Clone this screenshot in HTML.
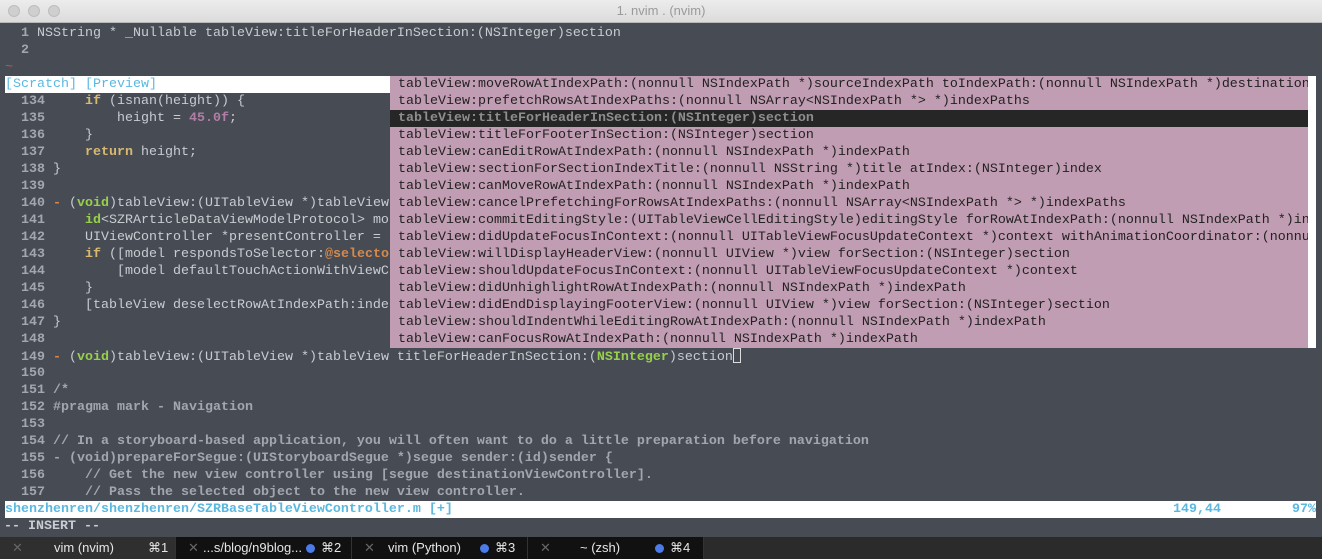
<!DOCTYPE html>
<html><head><meta charset="utf-8"><style>
*{margin:0;padding:0;box-sizing:border-box}
body{width:1322px;height:559px;background:#474b54;overflow:hidden;position:relative;font-family:"Liberation Mono",monospace;font-size:13.33px;color:#c9ccd1}
.tb{position:absolute;left:0;top:0;width:1322px;height:23px;background:linear-gradient(#ececec,#dcdcdc);border-bottom:1px solid #b8b8b8;font-family:"Liberation Sans",sans-serif;font-size:13px;color:#9a9a9a;text-align:center;line-height:22px}
.dot{position:absolute;top:5px;width:12px;height:12px;border-radius:50%;background:#cfcfcf;border:1px solid #bdbdbd}
.l{position:absolute;left:5px;height:17px;line-height:18px;white-space:pre}
.n{color:#a3a7ad;font-weight:bold}
.b{font-weight:bold}
.k{color:#d9b970;font-weight:bold}
.g{color:#97d04a;font-weight:bold}
.o{color:#d48a4c;font-weight:bold}
.p{color:#b07ea6;font-weight:bold}
.c{color:#a3a7ad;font-weight:bold}
.pop{position:absolute;left:390px;top:76px;width:918px;height:272px;background:#c19db3}
.pr{height:17px;line-height:18px;padding-left:8px;white-space:pre;color:#222;overflow:hidden}
.sel{background:#262626;color:#8e8e8e;font-weight:bold}
.sb{position:absolute;left:1308px;top:76px;width:8px;height:272px;background:#fff}
.tabs{position:absolute;left:0;top:537px;width:1322px;height:22px;background:#2b2b2b;font-family:"Liberation Sans",sans-serif;font-size:13px;color:#e6e6e6}
.tab{position:absolute;top:0;height:22px;width:176px;background:#111;border-right:1px solid #333;line-height:22px}
.tab .x{position:absolute;left:12px;color:#666}
.bd{display:inline-block;width:9px;height:9px;border-radius:50%;background:#4a7be8;position:absolute;top:7px}
</style></head><body>
<div class="tb">1. nvim . (nvim)
<div class="dot" style="left:8px"></div><div class="dot" style="left:28px"></div><div class="dot" style="left:48px"></div></div>

<div class="l" style="top:25px"><span class="n">  1</span> NSString * _Nullable tableView:titleForHeaderInSection:(NSInteger)section</div>
<div class="l" style="top:42px"><span class="n">  2</span></div>
<div class="l" style="top:59px;color:#d05050">~</div>
<div style="position:absolute;left:5px;top:76px;width:385px;height:17px;background:#fff"></div>
<div class="l" style="top:76px;left:5px;color:#5ab8e0">[Scratch] [Preview]</div>
<div class="l" style="top:93px"><span class="n">  134</span>     <span class="k">if</span> (isnan(height)) {</div>
<div class="l" style="top:110px"><span class="n">  135</span>         height = <span class="p">45.0f</span>;</div>
<div class="l" style="top:127px"><span class="n">  136</span>     }</div>
<div class="l" style="top:144px"><span class="n">  137</span>     <span class="k">return</span> height;</div>
<div class="l" style="top:161px"><span class="n">  138</span> }</div>
<div class="l" style="top:178px"><span class="n">  139</span></div>
<div class="l" style="top:195px"><span class="n">  140</span> <span class="o">-</span> (<span class="g">void</span>)tableView:(UITableView *)tableView</div>
<div class="l" style="top:212px"><span class="n">  141</span>     <span class="g">id</span>&lt;SZRArticleDataViewModelProtocol&gt; mo</div>
<div class="l" style="top:229px"><span class="n">  142</span>     UIViewController *presentController =</div>
<div class="l" style="top:246px"><span class="n">  143</span>     <span class="k">if</span> ([model respondsToSelector:<span class="o">@selecto</span></div>
<div class="l" style="top:263px"><span class="n">  144</span>         [model defaultTouchActionWithViewC</div>
<div class="l" style="top:280px"><span class="n">  145</span>     }</div>
<div class="l" style="top:297px"><span class="n">  146</span>     [tableView deselectRowAtIndexPath:inde</div>
<div class="l" style="top:314px"><span class="n">  147</span> }</div>
<div class="l" style="top:331px"><span class="n">  148</span></div>
<div class="l" style="top:348px"><span class="n">  149</span> <span class="o">-</span> (<span class="g">void</span>)tableView:(UITableView *)tableView titleForHeaderInSection:(<span class="g">NSInteger</span>)section<span style="display:inline-block;width:8px;height:15px;border:1px solid #ddd;vertical-align:-3px"></span></div>
<div class="l" style="top:365px"><span class="n">  150</span></div>
<div class="l c" style="top:382px"><span class="n">  151</span> /*</div>
<div class="l c" style="top:399px"><span class="n">  152</span> #pragma mark - Navigation</div>
<div class="l" style="top:416px"><span class="n">  153</span></div>
<div class="l c" style="top:433px"><span class="n">  154</span> // In a storyboard-based application, you will often want to do a little preparation before navigation</div>
<div class="l c" style="top:450px"><span class="n">  155</span> - (void)prepareForSegue:(UIStoryboardSegue *)segue sender:(id)sender {</div>
<div class="l c" style="top:467px"><span class="n">  156</span>     // Get the new view controller using [segue destinationViewController].</div>
<div class="l c" style="top:484px"><span class="n">  157</span>     // Pass the selected object to the new view controller.</div>

<div style="position:absolute;left:5px;top:501px;width:1311px;height:17px;background:#fff"></div>
<div class="l b" style="top:501px;left:5px;color:#5ab8e0">shenzhenren/shenzhenren/SZRBaseTableViewController.m [+]</div>
<div class="l b" style="top:501px;left:1173px;color:#5ab8e0">149,44</div>
<div class="l b" style="top:501px;left:1292px;color:#5ab8e0">97%</div>
<div class="l b" style="top:518px;left:4px;color:#c9ccd1">-- INSERT --</div>

<div class="pop">
<div class="pr">tableView:moveRowAtIndexPath:(nonnull NSIndexPath *)sourceIndexPath toIndexPath:(nonnull NSIndexPath *)destination</div>
<div class="pr">tableView:prefetchRowsAtIndexPaths:(nonnull NSArray&lt;NSIndexPath *&gt; *)indexPaths</div>
<div class="pr sel">tableView:titleForHeaderInSection:(NSInteger)section</div>
<div class="pr">tableView:titleForFooterInSection:(NSInteger)section</div>
<div class="pr">tableView:canEditRowAtIndexPath:(nonnull NSIndexPath *)indexPath</div>
<div class="pr">tableView:sectionForSectionIndexTitle:(nonnull NSString *)title atIndex:(NSInteger)index</div>
<div class="pr">tableView:canMoveRowAtIndexPath:(nonnull NSIndexPath *)indexPath</div>
<div class="pr">tableView:cancelPrefetchingForRowsAtIndexPaths:(nonnull NSArray&lt;NSIndexPath *&gt; *)indexPaths</div>
<div class="pr">tableView:commitEditingStyle:(UITableViewCellEditingStyle)editingStyle forRowAtIndexPath:(nonnull NSIndexPath *)in</div>
<div class="pr">tableView:didUpdateFocusInContext:(nonnull UITableViewFocusUpdateContext *)context withAnimationCoordinator:(nonnu</div>
<div class="pr">tableView:willDisplayHeaderView:(nonnull UIView *)view forSection:(NSInteger)section</div>
<div class="pr">tableView:shouldUpdateFocusInContext:(nonnull UITableViewFocusUpdateContext *)context</div>
<div class="pr">tableView:didUnhighlightRowAtIndexPath:(nonnull NSIndexPath *)indexPath</div>
<div class="pr">tableView:didEndDisplayingFooterView:(nonnull UIView *)view forSection:(NSInteger)section</div>
<div class="pr">tableView:shouldIndentWhileEditingRowAtIndexPath:(nonnull NSIndexPath *)indexPath</div>
<div class="pr">tableView:canFocusRowAtIndexPath:(nonnull NSIndexPath *)indexPath</div>
</div>
<div class="sb"></div>

<div class="tabs">
<div class="tab" style="left:0;background:#2f2f2f"><span class="x">✕</span><span style="position:absolute;left:54px">vim (nvim)</span><span style="position:absolute;left:148px">⌘1</span></div>
<div class="tab" style="left:176px"><span class="x">✕</span><span style="position:absolute;left:27px">...s/blog/n9blog...</span><span class="bd" style="left:130px"></span><span style="position:absolute;left:145px">⌘2</span></div>
<div class="tab" style="left:352px"><span class="x">✕</span><span style="position:absolute;left:36px">vim (Python)</span><span class="bd" style="left:128px"></span><span style="position:absolute;left:143px">⌘3</span></div>
<div class="tab" style="left:528px"><span class="x">✕</span><span style="position:absolute;left:52px">~ (zsh)</span><span class="bd" style="left:127px"></span><span style="position:absolute;left:142px">⌘4</span></div>
</div>
</body></html>
